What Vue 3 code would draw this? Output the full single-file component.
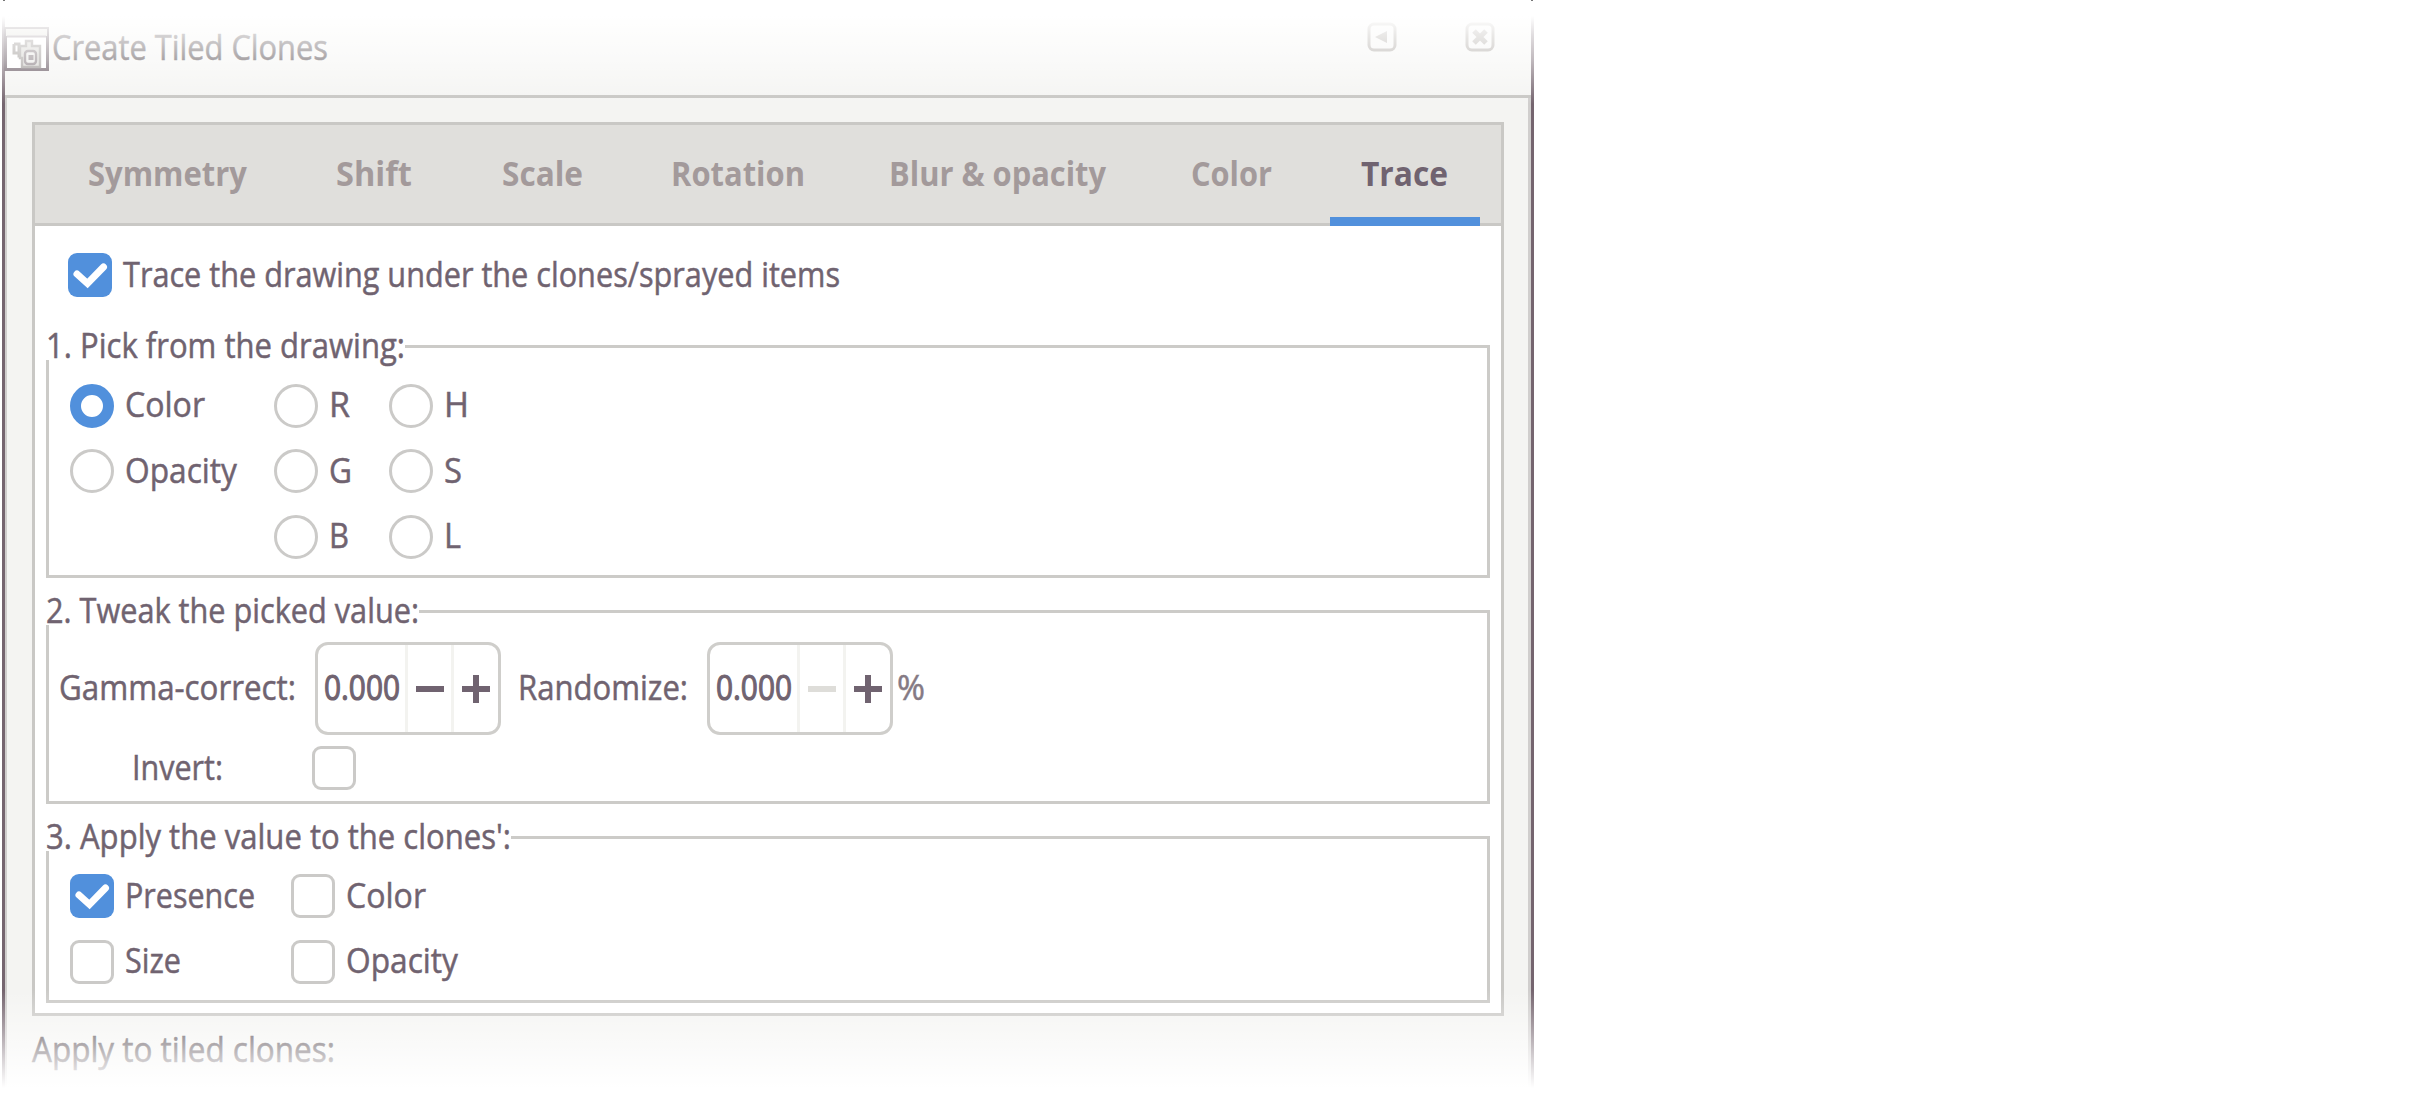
<script setup>
import { ref } from 'vue'

// Scales a label horizontally so that it takes exactly the given advance width.
const vFit = {
  mounted(el, { value }) {
    const natural = el.getBoundingClientRect().width
    el.style.transform = `scaleX(${value / natural})`
    el.style.marginRight = `${value - natural}px`
  },
}

const tabs = [
  { name: 'Symmetry', fit: 159, width: 248 },
  { name: 'Shift', fit: 76, width: 166 },
  { name: 'Scale', fit: 81, width: 169 },
  { name: 'Rotation', fit: 134, width: 218 },
  { name: 'Blur & opacity', fit: 217, width: 302 },
  { name: 'Color', fit: 81, width: 170 },
  { name: 'Trace', fit: 87, width: 150 },
]
const activeTab = ref('Trace')
const trace = ref(true)
const picked = ref('Color')
const pickRows = [
  [{ name: 'Color', fit: 80 }, { name: 'R', fit: 21 }, { name: 'H', fit: 25 }],
  [{ name: 'Opacity', fit: 112 }, { name: 'G', fit: 23 }, { name: 'S', fit: 18 }],
  [null, { name: 'B', fit: 20 }, { name: 'L', fit: 17 }],
]
const spins = [
  { label: 'Gamma-correct:', fit: 237, value: '0.000', atMin: false },
  { label: 'Randomize:', fit: 170, value: '0.000', atMin: true },
]
const invert = ref(false)
const applyTo = ref([
  { name: 'Presence', fit: 130, on: true },
  { name: 'Color', fit: 80, on: false },
  { name: 'Size', fit: 56, on: false },
  { name: 'Opacity', fit: 112, on: false },
])
</script>

<template>
  <div class="stage">
    <div class="window">
      <header class="titlebar">
        <svg class="app-icon" viewBox="0 0 45 44">
          <rect x="1.500" y="1.500" width="42" height="41" fill="#fff" stroke="#5a4b55" stroke-width="3" />
          <rect x="2" y="2" width="41" height="7" fill="#dcdbd4" />
          <path d="M3 9.500H42" stroke="#8c8088" stroke-width="2" />
          <path d="M10 17V26H16M10 17H15V29H19" fill="none" stroke="#8a8480" stroke-width="3" />
          <path d="M16 19H22V14H28V19H36V40H18V31H16Z" fill="#d0cfca" stroke="#8f8a87" stroke-width="2.400" />
          <rect x="21" y="24" width="11" height="13" rx="3" fill="#e8e7e4" stroke="#75696f" stroke-width="2.400" />
          <rect x="24.500" y="28" width="5" height="5" fill="#75696f" />
        </svg>
        <span v-fit="276" class="text title">Create Tiled Clones</span>
        <div class="win-buttons">
          <svg viewBox="0 0 30 30">
            <rect x="2" y="2" width="26" height="26" rx="5" />
            <path class="solid" d="M8 15L20 9V21Z" />
          </svg>
          <svg viewBox="0 0 30 30">
            <rect x="2" y="2" width="26" height="26" rx="5" />
            <path class="cross" d="M9 9L21 21M21 9L9 21" />
          </svg>
        </div>
      </header>

      <main class="body">
        <section class="notebook">
          <nav class="tabs">
            <button
              v-for="t in tabs"
              :key="t.name"
              :class="['tab', { active: t.name === activeTab }]"
              :style="{ width: t.width + 'px' }"
              @click="activeTab = t.name"
            >
              <span v-fit="t.fit" class="text">{{ t.name }}</span>
            </button>
          </nav>

          <div class="page">
            <label class="option trace" @click="trace = !trace">
              <span :class="['check', { on: trace }]">
                <svg v-if="trace" viewBox="0 0 44 44"><path d="M9 21L19.500 30.500L35.500 14" /></svg>
              </span>
              <span v-fit="717" class="text">Trace the drawing under the clones/sprayed items</span>
            </label>

            <div class="frame pick">
              <div class="legend"><span v-fit="359" class="text">1. Pick from the drawing:</span></div>
              <div class="pick-grid">
                <template v-for="(row, r) in pickRows" :key="r">
                  <template v-for="(o, c) in row" :key="c">
                    <label v-if="o" class="option" @click="picked = o.name">
                      <span :class="['radio', { on: picked === o.name }]"></span>
                      <span v-fit="o.fit" class="text">{{ o.name }}</span>
                    </label>
                    <span v-else></span>
                  </template>
                </template>
              </div>
            </div>

            <div class="frame tweak">
              <div class="legend"><span v-fit="373" class="text">2. Tweak the picked value:</span></div>
              <div class="spin-row">
                <template v-for="s in spins" :key="s.label">
                  <span v-fit="s.fit" class="text">{{ s.label }}</span>
                  <div class="spin">
                    <div class="value"><span v-fit="76" class="text">{{ s.value }}</span></div>
                    <div :class="['step', { off: s.atMin }]">
                      <svg viewBox="0 0 28 28"><path d="M0 14H28" /></svg>
                    </div>
                    <div class="step">
                      <svg viewBox="0 0 28 28"><path d="M0 14H28M14 0V28" /></svg>
                    </div>
                  </div>
                </template>
                <span v-fit="28" class="text percent">%</span>
              </div>
              <div class="invert-row">
                <span v-fit="91" class="text">Invert:</span>
                <span :class="['check', { on: invert }]" @click="invert = !invert"></span>
              </div>
            </div>

            <div class="frame apply">
              <div class="legend"><span v-fit="465" class="text">3. Apply the value to the clones':</span></div>
              <div class="apply-grid">
                <label v-for="o in applyTo" :key="o.name" class="option" @click="o.on = !o.on">
                  <span :class="['check', { on: o.on }]">
                    <svg v-if="o.on" viewBox="0 0 44 44"><path d="M9 21L19.500 30.500L35.500 14" /></svg>
                  </span>
                  <span v-fit="o.fit" class="text">{{ o.name }}</span>
                </label>
              </div>
            </div>
          </div>
        </section>
        <div class="footer"><span v-fit="303" class="text">Apply to tiled clones:</span></div>
      </main>
      <div class="fade"></div>
    </div>
  </div>
</template>

<style>
body {
  margin: 0;
  background: #fff;
}
</style>

<style scoped>
.stage {
  width: 2410px;
  height: 1094px;
  background: #fff;
  overflow: hidden;
}
.stage * {
  box-sizing: border-box;
}
.window {
  position: relative;
  width: 1532px;
  height: 1094px;
  margin-left: 2px;
  border: solid #75656f;
  border-width: 0 3px;
  background: #f4f4f2;
  color: #706370;
  font: 34px/44px 'Open Sans', 'Noto Sans', sans-serif;
}
.text {
  display: inline-block;
  flex: none;
  white-space: nowrap;
  transform-origin: 0 50%;
  -webkit-text-stroke: 0.5px currentColor;
}
.titlebar {
  display: flex;
  height: 98px;
  border-bottom: 3px solid #c6c5c2;
}
.app-icon {
  width: 45px;
  height: 44px;
  margin: 27px 3px 0 -1px;
  flex: none;
}
.title {
  margin-top: 25px;
  color: #40363a;
}
.win-buttons {
  display: flex;
  gap: 68px;
  margin: 22px 36px 0 auto;
}
.win-buttons svg {
  width: 30px;
  height: 30px;
  fill: none;
  stroke: #9d9791;
  stroke-width: 3;
}
.win-buttons .solid {
  fill: #9d9791;
  stroke: none;
}
.win-buttons .cross {
  stroke-width: 5;
}
.body {
  height: 996px;
  padding: 24px 24px 0 25px;
  border: solid #d0cecd;
  border-width: 0 3px 0 2px;
}
.notebook {
  height: 894px;
  border: 3px solid #c9c8c5;
  background: #fff;
}
.tabs {
  display: flex;
  height: 101px;
  padding-left: 22px;
  border-bottom: 3px solid #c9c8c5;
  background: #e0dfdc;
}
.tab {
  display: flex;
  flex: none;
  align-items: center;
  justify-content: flex-start;
  height: 101px;
  padding: 4px 0 0 31px;
  border: 0;
  border-bottom: 9px solid transparent;
  background: none;
  color: #a39a9b;
  font: inherit;
  font-weight: 700;
}
.tab .text {
  -webkit-text-stroke: 0;
}
.tab.active {
  border-color: #5190dc;
  color: #706370;
}
.page {
  display: flex;
  flex-direction: column;
  padding: 27px 11px 0;
}
.option {
  display: flex;
  align-items: center;
  gap: 11px;
  height: 44px;
}
.option .text {
  margin-top: -3px;
}
.trace {
  margin: 0 0 48px 22px;
}
.check,
.radio {
  display: block;
  flex: none;
  width: 44px;
  height: 44px;
  border: 3px solid #cbcac8;
  border-radius: 9px;
  background: #fff;
}
.check.on {
  border: 0;
  background: #5190dc;
}
.check svg {
  display: block;
  fill: none;
  stroke: #fff;
  stroke-width: 7;
  stroke-linecap: round;
}
.radio {
  border-radius: 50%;
}
.radio.on {
  border: 11px solid #5190dc;
}
.frame {
  border: 3px solid #cccbc8;
}
.legend {
  display: flex;
  width: fit-content;
  height: 30px;
  margin: -18px 0 0 -3px;
  align-items: center;
  background: #fff;
}
.pick {
  height: 233px;
  margin-bottom: 32px;
}
.tweak {
  height: 194px;
  margin-bottom: 32px;
}
.apply {
  height: 167px;
}
.pick-grid {
  display: grid;
  grid-template-columns: 204px 115px 115px;
  row-gap: 21.500px;
  padding: 23.500px 0 0 21px;
}
.spin-row {
  display: flex;
  align-items: center;
  height: 93px;
  margin-top: 17px;
  padding-left: 10px;
}
.spin {
  display: flex;
  width: 186px;
  height: 93px;
  margin: 0 17px 0 19px;
  border: 3px solid #cfcecb;
  border-radius: 13px;
  overflow: hidden;
  flex: none;
}
.spin ~ .spin {
  margin-right: 4px;
}
.value {
  display: flex;
  align-items: center;
  width: 87px;
  padding-left: 6px;
}
.spin-row .text {
  margin-top: -3px;
}
.value .text {
  -webkit-text-stroke: 1.1px currentColor;
}
.step {
  display: grid;
  place-items: center;
  width: 46px;
  border-left: 3px solid #f3f3f0;
}
.step svg {
  width: 28px;
  height: 28px;
  stroke: #706370;
  stroke-width: 6;
}
.step.off svg {
  stroke: #deddd9;
}
.percent {
  color: #857a84;
}
.invert-row {
  display: flex;
  align-items: center;
  gap: 89px;
  height: 44px;
  margin-top: 11px;
  padding-left: 83px;
}
.invert-row .text {
  margin-top: -2px;
}
.apply-grid {
  display: grid;
  grid-template-columns: 221px 200px;
  row-gap: 21.500px;
  padding: 23px 0 0 21px;
}
.footer {
  padding-top: 11px;
  color: #4a3f46;
}
.fade {
  position: absolute;
  inset: 0 -3px;
  pointer-events: none;
  background: linear-gradient(
    #fff 16px,
    rgba(255, 255, 255, 0.78) 35px,
    rgba(255, 255, 255, 0.55) 60px,
    rgba(255, 255, 255, 0) 104px,
    rgba(255, 255, 255, 0) 990px,
    rgba(255, 255, 255, 0.42) 1032px,
    rgba(255, 255, 255, 0.72) 1060px,
    #fff 1088px
  );
}
.fade::before,
.fade::after {
  content: '';
  position: absolute;
  top: 0;
  left: 1px;
  width: 2px;
  height: 1px;
  background: #777;
}
.fade::after {
  left: auto;
  right: 1px;
}
</style>
